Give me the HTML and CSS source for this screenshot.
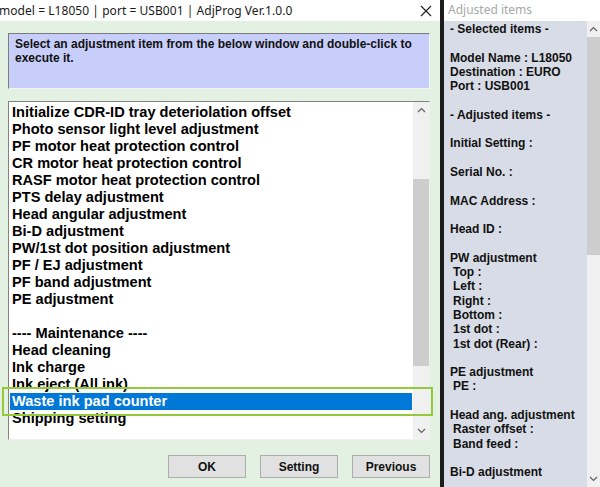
FILE: index.html
```html
<!DOCTYPE html>
<html>
<head>
<meta charset="utf-8">
<link rel="stylesheet" href="styles.css">
</head>
<body>
<div class="screen">
  <div class="win">
    <div class="titlebar">
      <span class="title">model = L18050 | port = USB001 | AdjProg Ver.1.0.0</span>
      <svg class="close" width="12" height="12" viewBox="0 0 12 12"><path d="M1 1L11 11M11 1L1 11" stroke="#222" stroke-width="1.2" fill="none"/></svg>
    </div>
    <div class="body">
      <div class="info">Select an adjustment item from the below window and double-click to execute it.</div>
      <div class="listbox">
        <div class="items">
          <div class="item">Initialize CDR-ID tray deteriolation offset</div>
          <div class="item">Photo sensor light level adjustment</div>
          <div class="item">PF motor heat protection control</div>
          <div class="item">CR motor heat protection control</div>
          <div class="item">RASF motor heat protection control</div>
          <div class="item">PTS delay adjustment</div>
          <div class="item">Head angular adjustment</div>
          <div class="item">Bi-D adjustment</div>
          <div class="item">PW/1st dot position adjustment</div>
          <div class="item">PF / EJ adjustment</div>
          <div class="item">PF band adjustment</div>
          <div class="item">PE adjustment</div>
          <div class="item">&nbsp;</div>
          <div class="item">---- Maintenance ----</div>
          <div class="item">Head cleaning</div>
          <div class="item">Ink charge</div>
          <div class="item">Ink eject (All ink)</div>
          <div class="item selected">Waste ink pad counter</div>
          <div class="item">Shipping setting</div>
        </div>
        <div class="vscroll">
          <svg class="arrow" width="9" height="6" viewBox="0 0 9 6"><path d="M1 5L4.5 1.5L8 5" stroke="#606060" stroke-width="1.2" fill="none"/></svg>
          <div class="track"><div class="thumb list-thumb"></div></div>
          <svg class="arrow" width="9" height="6" viewBox="0 0 9 6"><path d="M1 1L4.5 4.5L8 1" stroke="#606060" stroke-width="1.2" fill="none"/></svg>
        </div>
        <div class="highlight"></div>
      </div>
      <div class="buttons">
        <button class="btn">OK</button>
        <button class="btn">Setting</button>
        <button class="btn">Previous</button>
      </div>
    </div>
  </div>
  <div class="divider"></div>
  <div class="side">
    <div class="side-title">Adjusted items</div>
    <div class="side-body">
      <div class="panel">
        <div class="ln">- Selected items -</div>
        <div class="ln">&nbsp;</div>
        <div class="ln">Model Name : L18050</div>
        <div class="ln">Destination : EURO</div>
        <div class="ln">Port : USB001</div>
        <div class="ln">&nbsp;</div>
        <div class="ln">- Adjusted items -</div>
        <div class="ln">&nbsp;</div>
        <div class="ln">Initial Setting :</div>
        <div class="ln">&nbsp;</div>
        <div class="ln">Serial No. :</div>
        <div class="ln">&nbsp;</div>
        <div class="ln">MAC Address :</div>
        <div class="ln">&nbsp;</div>
        <div class="ln">Head ID :</div>
        <div class="ln">&nbsp;</div>
        <div class="ln">PW adjustment</div>
        <div class="ln ind">Top :</div>
        <div class="ln ind">Left :</div>
        <div class="ln ind">Right :</div>
        <div class="ln ind">Bottom :</div>
        <div class="ln ind">1st dot :</div>
        <div class="ln ind">1st dot (Rear) :</div>
        <div class="ln">&nbsp;</div>
        <div class="ln">PE adjustment</div>
        <div class="ln ind">PE :</div>
        <div class="ln">&nbsp;</div>
        <div class="ln">Head ang. adjustment</div>
        <div class="ln ind">Raster offset :</div>
        <div class="ln ind">Band feed :</div>
        <div class="ln">&nbsp;</div>
        <div class="ln">Bi-D adjustment</div>
      </div>
      <div class="vscroll side-scroll">
        <svg class="arrow" width="9" height="6" viewBox="0 0 9 6"><path d="M1 5L4.5 1.5L8 5" stroke="#606060" stroke-width="1.2" fill="none"/></svg>
        <div class="track"><div class="thumb side-thumb"></div></div>
        <svg class="arrow" width="9" height="6" viewBox="0 0 9 6"><path d="M1 1L4.5 4.5L8 1" stroke="#606060" stroke-width="1.2" fill="none"/></svg>
      </div>
    </div>
  </div>
</div>
</body>
</html>
```
FILE: styles.css
```css
html, body {
  margin: 0;
  padding: 0;
  width: 600px;
  height: 487px;
  overflow: hidden;
  background: #ffffff;
}
.screen {
  display: flex;
  width: 600px;
  height: 487px;
}
.win {
  width: 440px;
  display: flex;
  flex-direction: column;
  flex: none;
}
.titlebar {
  height: 21px;
  background: #ffffff;
  display: flex;
  align-items: center;
  justify-content: space-between;
  padding: 0 8px 0 0;
  box-sizing: border-box;
}
.title {
  font-family: "Noto Sans", "Open Sans", sans-serif;
  font-size: 12px;
  color: #1a1a1a;
  white-space: nowrap;
  margin-left: -1px;
  letter-spacing: 0.05px;
}
.close {
  display: block;
}
.body {
  flex: 1;
  background: #e2f1e2;
  padding: 12px 10px 0 8px;
  display: flex;
  flex-direction: column;
}
.info {
  height: 56px;
  box-sizing: border-box;
  background: #c8cefa;
  border-top: 1px solid #7c7c7c;
  border-left: 1px solid #7c7c7c;
  border-right: 1px solid #f4f4f4;
  border-bottom: 1px solid #f4f4f4;
  padding: 3px 6px;
  font-family: "Liberation Sans", Arial, sans-serif;
  font-weight: bold;
  font-size: 12px;
  line-height: 14px;
  color: #111;
}
.listbox {
  position: relative;
  margin-top: 12px;
  height: 339px;
  box-sizing: border-box;
  background: #ffffff;
  border-top: 1px solid #828282;
  border-left: 1px solid #828282;
  border-right: 1px solid #f0f0f0;
  border-bottom: 1px solid #f0f0f0;
  display: flex;
}
.items {
  flex: 1;
  padding: 2px 1px 0 1px;
  overflow: hidden;
}
.item {
  height: 17px;
  line-height: 17px;
  font-family: "Liberation Sans", Arial, sans-serif;
  font-weight: bold;
  font-size: 14.6px;
  color: #000;
  padding-left: 2px;
  white-space: nowrap;
}
.item.selected {
  background: #0078d7;
  color: #ffffff;
}
.vscroll {
  width: 16px;
  background: #f0f0f0;
  display: flex;
  flex-direction: column;
  align-items: center;
  flex: none;
}
.vscroll .arrow {
  display: block;
  margin: 5px 0;
  flex: none;
}
.track {
  flex: 1;
  width: 100%;
  position: relative;
}
.thumb {
  position: absolute;
  left: 0;
  right: 0;
  background: #cdcdcd;
}
.list-thumb {
  top: 61px;
  height: 187px;
}
.side-thumb {
  top: 0;
  height: 218px;
}
.highlight {
  position: absolute;
  left: -7px;
  top: 285px;
  width: 431px;
  height: 29px;
  border: 2px solid #96c83c;
  box-sizing: border-box;
}
.buttons {
  display: flex;
  justify-content: flex-end;
  gap: 14px;
  margin-top: 15px;
  padding-right: 0;
}
.btn {
  width: 78px;
  height: 23px;
  background: #e1e1e1;
  border: 1px solid #adadad;
  font-family: "Liberation Sans", Arial, sans-serif;
  font-weight: bold;
  font-size: 12px;
  color: #111;
  padding: 0;
}
.divider {
  width: 4px;
  background: #1c1c1c;
  flex: none;
}
.side {
  flex: 1;
  display: flex;
  flex-direction: column;
  background: #ffffff;
}
.side-title {
  height: 21px;
  line-height: 20px;
  font-family: "Noto Sans", "Open Sans", sans-serif;
  font-size: 12px;
  color: #a8a8a8;
  padding-left: 4px;
}
.side-body {
  flex: 1;
  display: flex;
  background: #f0f0f0;
}
.panel {
  flex: 1;
  background: #d8dce6;
  padding: 1px 0 0 6px;
  overflow: hidden;
}
.ln {
  height: 14.3px;
  line-height: 14.3px;
  font-family: "Liberation Sans", Arial, sans-serif;
  font-weight: bold;
  font-size: 12px;
  color: #111;
  white-space: nowrap;
}
.ln.ind {
  padding-left: 3px;
}
.side-scroll {
  width: 13px;
}
```
